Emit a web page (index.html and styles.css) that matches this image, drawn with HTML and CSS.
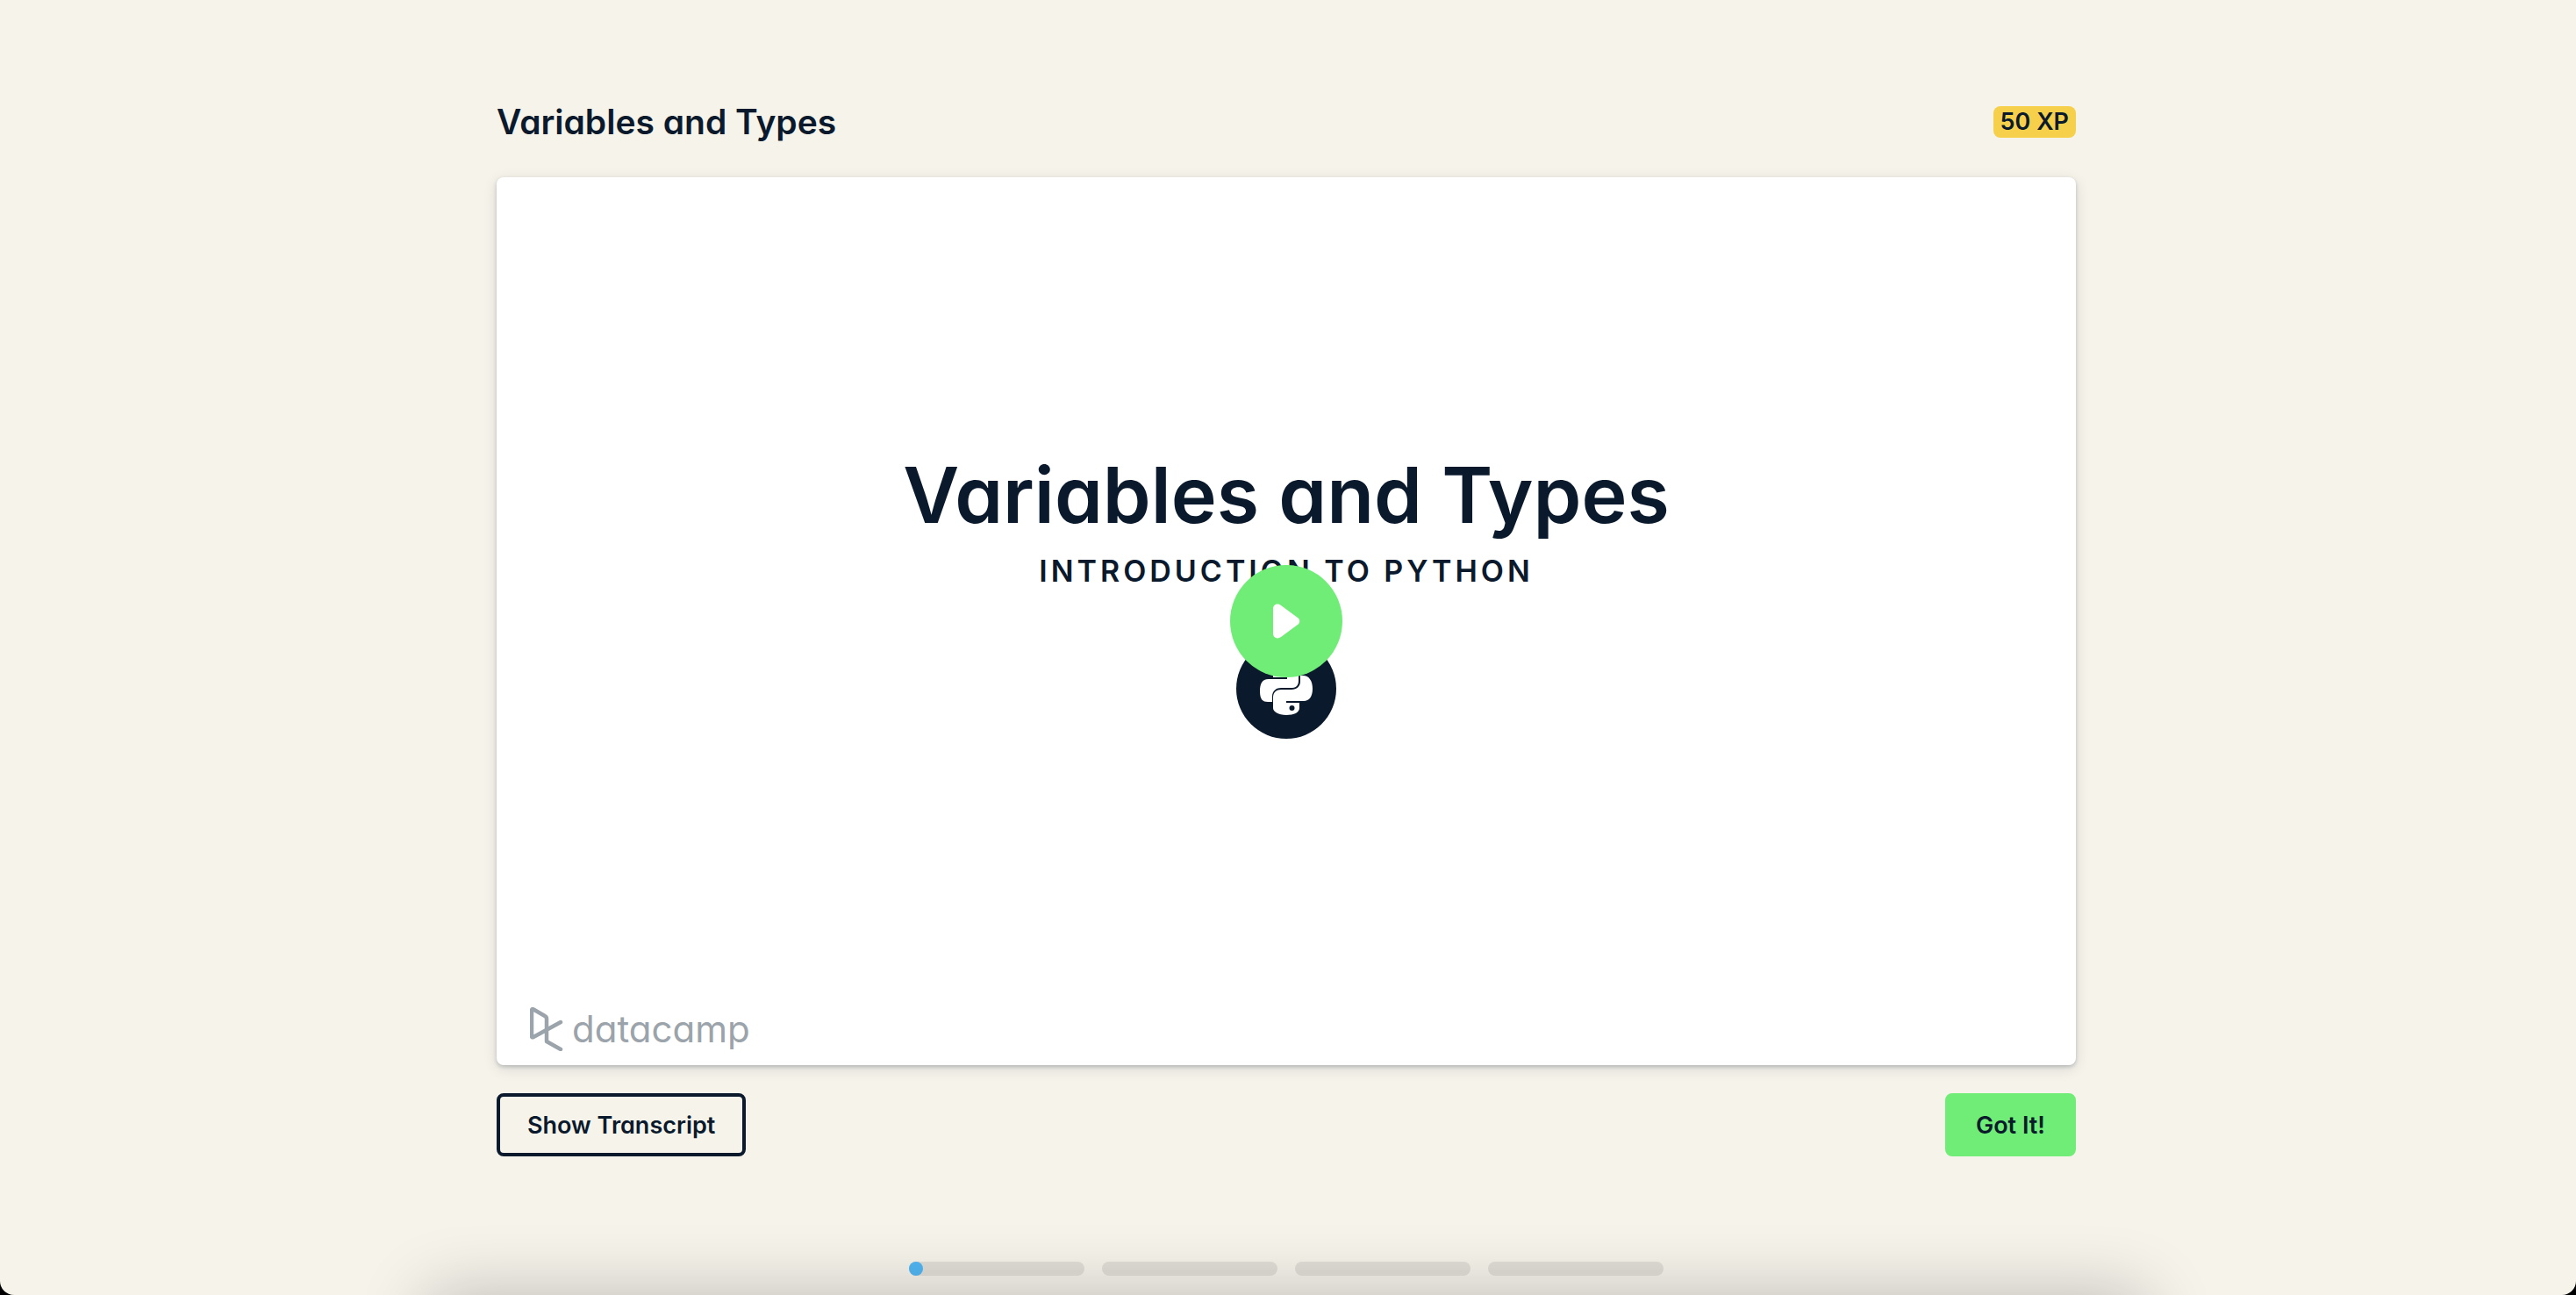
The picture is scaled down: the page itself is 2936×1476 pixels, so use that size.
FILE: index.html
```html
<!DOCTYPE html>
<html lang="en">
<head>
<meta charset="utf-8">
<title>Variables and Types</title>
<link rel="stylesheet" href="styles.css">
</head>
<body>
<div class="page">
  <main class="exercise">
    <header class="exercise-header">
      <h1 class="exercise-title">Variables and Types</h1>
      <span class="xp">50 XP</span>
    </header>
    <section class="video" aria-label="Video">
      <div class="slide">
        <h2 class="slide-title">Variables and Types</h2>
        <p class="slide-course">INTRODUCTION TO PYTHON</p>
        <svg class="slide-badge" viewBox="0 0 114 114" aria-hidden="true">
          <circle cx="57" cy="57" r="57" fill="#0a1a2c"/>
          <path fill="#fff" d="M57 27c-12 0-15 4-15 9v8h16v2H37c-8 0-10 6-10 14 0 9 3 12 9 12h5v-6c0-7 5-10 10-10h13c5 0 7-4 7-8V36c0-6-5-9-14-9z"/>
          <path fill="#fff" d="M73 42h3c7 0 11 6 11 15 0 9-4 14-10 14H57v2h15v6c0 5-6 8-15 8s-15-4-15-8V67c0-6 4-9 9-9h12c6 0 10-4 10-9z"/>
          <circle cx="63.500" cy="79" r="3" fill="#0a1a2c"/>
        </svg>
      </div>
      <button class="play" type="button" aria-label="Play video">
        <svg viewBox="0 0 32 40" width="32" height="40" aria-hidden="true"><path fill="#fff" d="M1 6C1 1 6-1 10 2l19 14c3 2 3 6 0 8L10 38c-4 3-9 1-9-4z"/></svg>
      </button>
      <div class="brand">
        <svg viewBox="0 0 38 50" width="38" height="50" aria-hidden="true"><path fill="none" stroke="#9ba3ab" stroke-width="4.500" stroke-linecap="round" stroke-linejoin="round" d="M35 17 4 34q-2 1-2-1V4q0-3 3-1l12 7q2 1 2 3v26l16 9"/></svg>
        <span class="brand-name">datacamp</span>
      </div>
    </section>
    <div class="actions">
      <button class="btn btn-outline" type="button">Show Transcript</button>
      <button class="btn btn-primary" type="button">Got It!</button>
    </div>
  </main>
  <nav class="progress" aria-label="Exercise progress">
    <span class="step"><span class="step-fill"></span></span>
    <span class="step"></span>
    <span class="step"></span>
    <span class="step"></span>
  </nav>
  <div class="drawer"></div>
</div>
</body>
</html>
```

FILE: styles.css
```css
* { box-sizing: border-box; }
html { background: #000; }
body {
  margin: 0;
  color: #0a1a2c;
  font-family: Inter, "Liberation Sans", sans-serif;
  font-feature-settings: "cv11";
}
.page {
  position: relative;
  display: flex;
  flex-direction: column;
  align-items: center;
  min-height: 100vh;
  padding: 118px 20px 22px 16px;
  overflow: hidden;
  background: #f6f3eb;
  border-radius: 0 0 16px 16px;
}
.exercise { width: 100%; max-width: 1800px; }
.exercise-header {
  display: flex;
  align-items: center;
  justify-content: space-between;
  height: 42px;
  margin-bottom: 42px;
}
.exercise-title { margin: 0; font-size: 39px; line-height: 42px; font-weight: 600; }
.xp {
  padding: 0 8px;
  border-radius: 8px;
  background: #f6d04b;
  font-size: 27px;
  line-height: 36px;
  font-weight: 600;
}
.video {
  position: relative;
  aspect-ratio: 1800 / 1012;
  border-radius: 8px;
  background: #fff;
  box-shadow: 0 2px 4px rgba(5, 25, 45, .2), 0 4px 16px rgba(5, 25, 45, .12);
}
.slide {
  display: flex;
  flex-direction: column;
  align-items: center;
  padding-top: 304px;
}
.slide-title { margin: 0; font-size: 88px; line-height: 116px; font-weight: 600; }
.slide-course {
  margin: 8px 0 0;
  font-size: 34px;
  line-height: 42px;
  font-weight: 600;
  letter-spacing: 4px;
}
.slide-badge { width: 114px; height: 114px; margin-top: 56px; }
.play {
  position: absolute;
  inset: 0;
  display: flex;
  align-items: center;
  justify-content: center;
  width: 128px;
  height: 128px;
  margin: auto;
  padding: 0;
  border: 0;
  border-radius: 50%;
  background: #6fed76;
}
.brand {
  position: absolute;
  left: 38px;
  bottom: 14px;
  display: flex;
  align-items: center;
  gap: 10px;
  color: #9ba3ab;
}
.brand-name { font-size: 42px; line-height: 54px; }
.actions { display: flex; justify-content: space-between; margin-top: 32px; }
.btn {
  height: 72px;
  padding: 0 31px;
  border: 4px solid #0a1a2c;
  border-radius: 8px;
  background: transparent;
  color: inherit;
  font: inherit;
  font-feature-settings: inherit;
  font-size: 27px;
  font-weight: 600;
}
.btn-primary { border-color: #6fed76; background: #6fed76; }
.progress { display: flex; gap: 20px; margin-top: 120px; }
.step { width: 200px; height: 16px; border-radius: 8px; background: #e1ded7; }
.step-fill { display: block; width: 16px; height: 16px; border-radius: 8px; background: #52b6f2; }
.drawer {
  position: absolute;
  top: 100%;
  width: 1956px;
  height: 200px;
  box-shadow: 0 0 80px rgba(5, 5, 5, .24);
}
```
